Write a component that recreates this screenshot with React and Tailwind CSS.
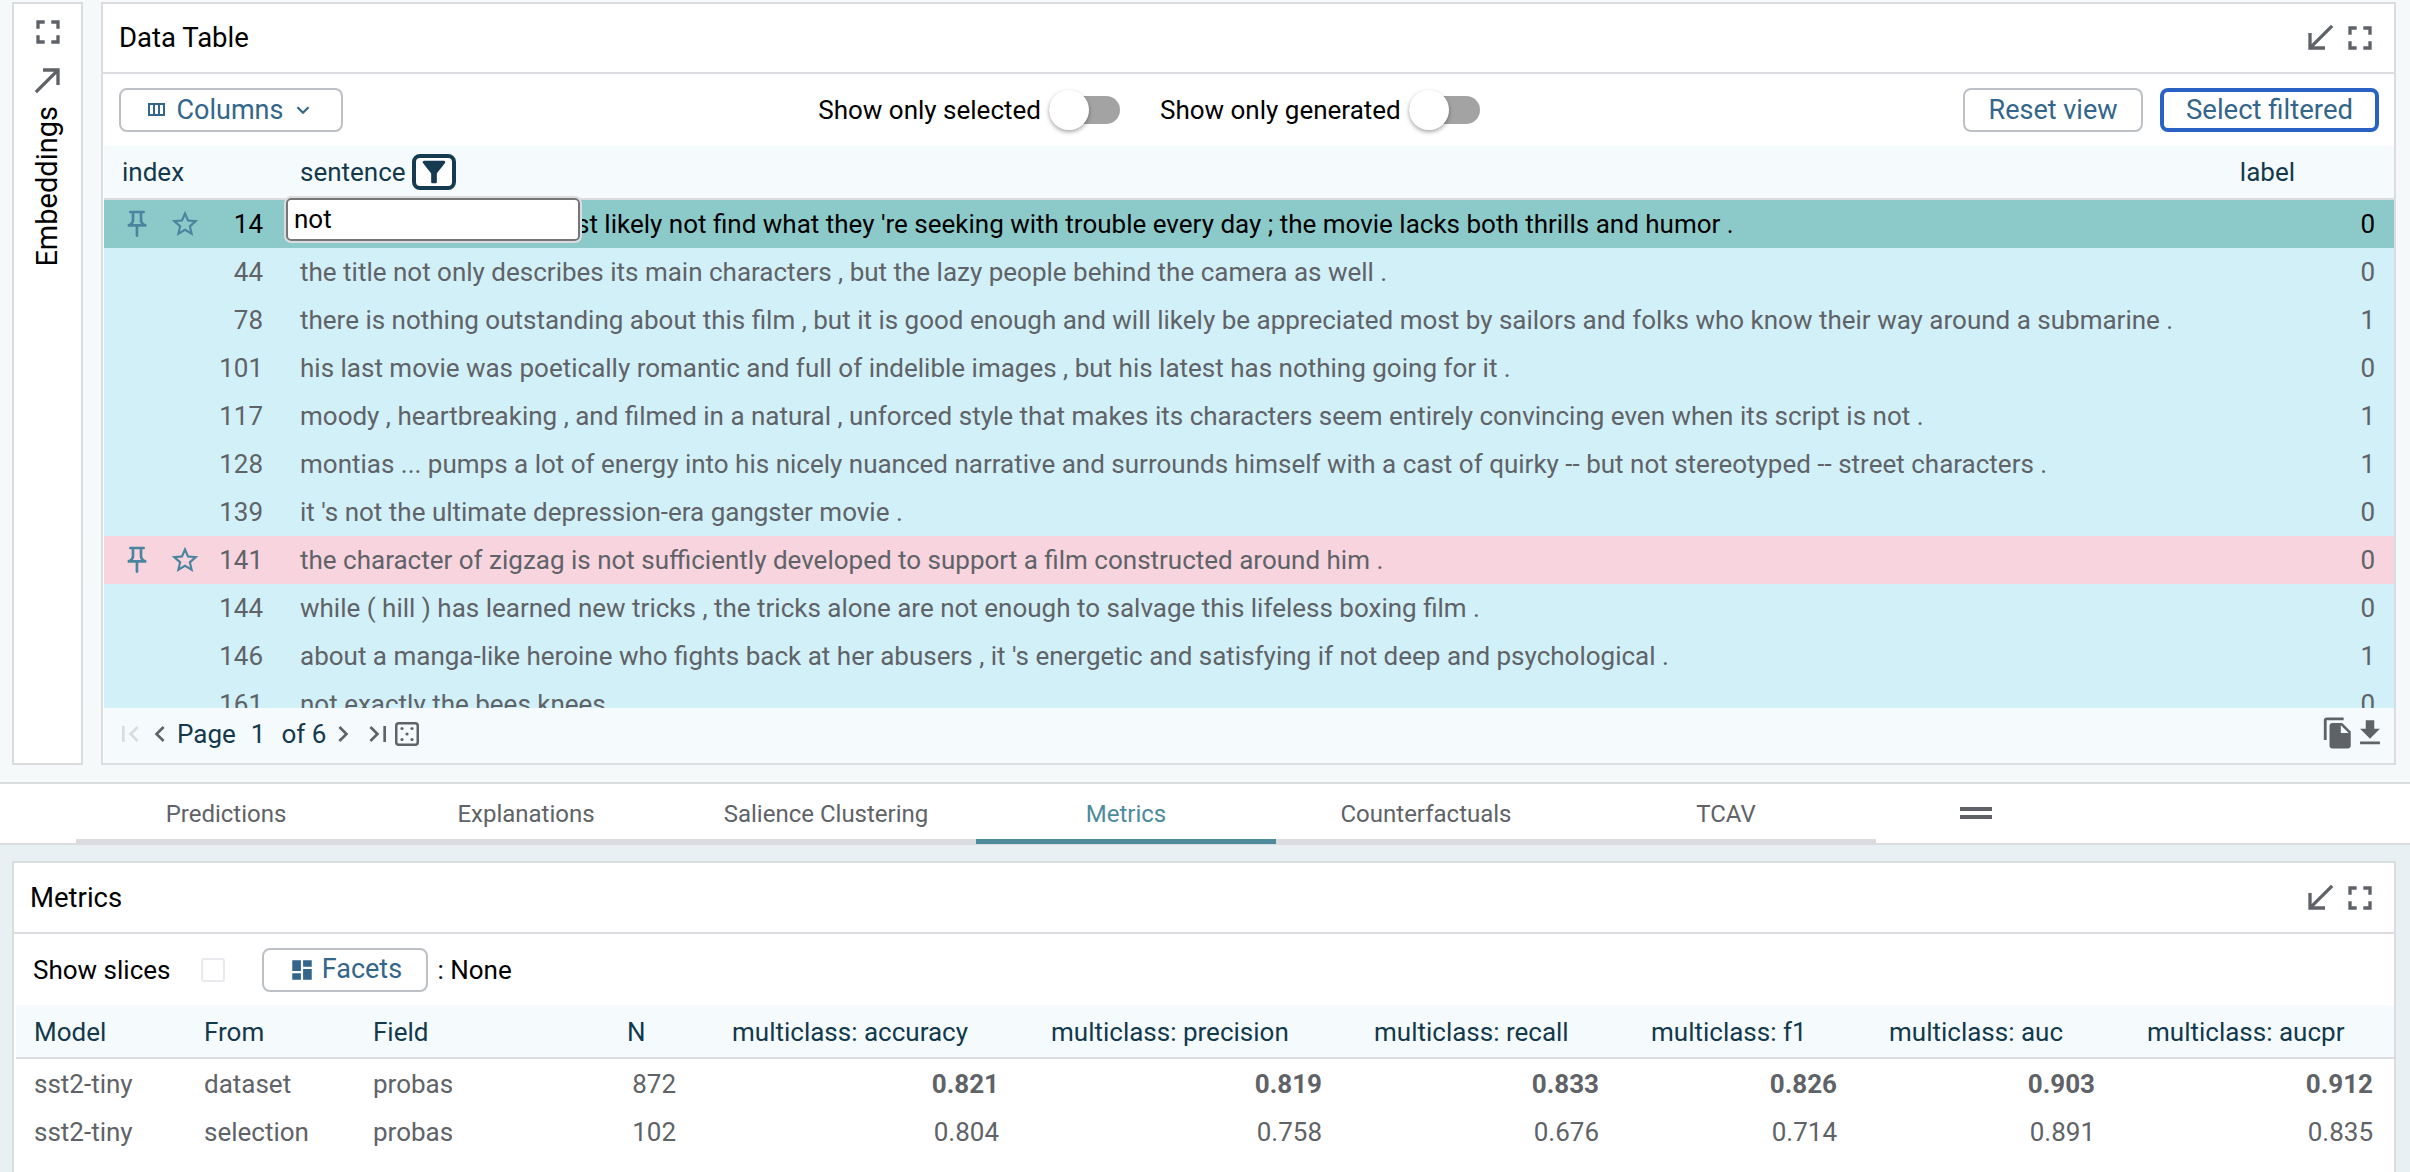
import React from "react";

const Ico = ({ d, className = "", size = 40 }) => (
  <svg viewBox="0 0 24 24" width={size} height={size} className={`shrink-0 fill-current ${className}`}>
    <path d={d} />
  </svg>
);

const P = {
  full: "M7 14H5v5h5v-2H7v-3zm-2-4h2V7h3V5H5v5zm12 7h-3v2h5v-5h-2v3zM14 5v2h3v3h2V5h-5z",
  ne: "M9 5v2h6.59L4 18.59 5.41 20 17 8.41V15h2V5H9z",
  sw: "M15 19v-2H8.41L20 5.41 18.59 4 7 15.59V9H5v10h10z",
  col: "M4 5v13h17V5H4zm10 2v9h-3V7h3zM6 7h3v9H6V7zm13 9h-3V7h3v9z",
  pin: "M14 4v5c0 1.12.37 2.16 1 3H9c.65-.86 1-1.9 1-3V4h4m3-2H7c-.55 0-1 .45-1 1s.45 1 1 1h1v5c0 1.66-1.34 3-3 3v2h5.97v7l1 1 1-1v-7H19v-2c-1.66 0-3-1.34-3-3V4h1c.55 0 1-.45 1-1s-.45-1-1-1z",
  star: "M22 9.24l-7.19-.62L12 2 9.19 8.63 2 9.24l5.46 4.73L5.82 21 12 17.27 18.18 21l-1.63-7.03L22 9.24zM12 15.4l-3.76 2.27 1-4.28-3.32-2.88 4.38-.38L12 6.1l1.71 4.04 4.38.38-3.32 2.88 1 4.28L12 15.4z",
  filter: "M4.25 5.61C6.27 8.2 10 13 10 13v6c0 .55.45 1 1 1h2c.55 0 1-.45 1-1v-6s3.72-4.8 5.74-7.39A1 1 0 0 0 18.95 4H5.04a1 1 0 0 0-.79 1.61z",
  prev: "M15.41 7.41 14 6l-6 6 6 6 1.41-1.41L10.83 12z",
  next: "M10 6 8.59 7.41 13.17 12l-4.58 4.59L10 18l6-6z",
  first: "M18.41 16.59 13.82 12l4.59-4.59L17 6l-6 6 6 6zM6 6h2v12H6z",
  last: "M5.59 7.41 10.18 12l-4.59 4.59L7 18l6-6-6-6zM16 6h2v12h-2z",
  copy: "M16 1H4c-1.1 0-2 .9-2 2v14h2V3h12V1zm-1 4 6 6v10c0 1.1-.9 2-2 2H7.99C6.89 23 6 22.1 6 21l.01-14c0-1.1.89-2 1.99-2h7zm-1 7h5.5L14 6.5V12z",
  dl: "M19 9h-4V3H9v6H5l7 7 7-7zM5 18v2h14v-2H5z",
  dash: "M3 13h8V3H3v10zm0 8h8v-6H3v6zm10 0h8V11h-8v10zm0-18v6h8V3h-8z",
};

const rows = [
  ["14", "st likely not find what they 're seeking with trouble every day ; the movie lacks both thrills and humor .", "0", "p"],
  ["44", "the title not only describes its main characters , but the lazy people behind the camera as well .", "0"],
  ["78", "there is nothing outstanding about this film , but it is good enough and will likely be appreciated most by sailors and folks who know their way around a submarine .", "1"],
  ["101", "his last movie was poetically romantic and full of indelible images , but his latest has nothing going for it .", "0"],
  ["117", "moody , heartbreaking , and filmed in a natural , unforced style that makes its characters seem entirely convincing even when its script is not .", "1"],
  ["128", "montias ... pumps a lot of energy into his nicely nuanced narrative and surrounds himself with a cast of quirky -- but not stereotyped -- street characters .", "1"],
  ["139", "it 's not the ultimate depression-era gangster movie .", "0"],
  ["141", "the character of zigzag is not sufficiently developed to support a film constructed around him .", "0", "r"],
  ["144", "while ( hill ) has learned new tricks , the tricks alone are not enough to salvage this lifeless boxing film .", "0"],
  ["146", "about a manga-like heroine who fights back at her abusers , it 's energetic and satisfying if not deep and psychological .", "1"],
  ["161", "not exactly the bees knees", "0"],
];

const Btn = ({ children, className = "", border = "border-2 border-[#bdc1c6]", text = "text-[27px]" }) => (
  <button className={`flex h-[44px] items-center justify-center rounded-[8px] bg-white text-[#33668a] ${text} ${border} ${className}`}>
    {children}
  </button>
);

const Toggle = ({ label }) => (
  <div className="flex items-center">
    <span className="text-[26px] text-black">{label}</span>
    <div className="relative ml-[8px] h-[28px] w-[71px] rounded-full bg-[#a3a3a3]">
      <div className="absolute left-0 top-[-6px] h-[40px] w-[40px] rounded-full bg-white shadow-[0_2px_4px_rgba(0,0,0,0.35)]" />
    </div>
  </div>
);

const TitleBar = ({ title, h }) => (
  <div className={`flex shrink-0 items-center justify-between border-b-2 border-[#dadce0] bg-white pl-[16px] pr-[14px] ${h}`}>
    <span className="text-[27.5px] text-black">{title}</span>
    <div className="flex text-[#5f6368]">
      <Ico d={P.sw} />
      <Ico d={P.full} />
    </div>
  </div>
);

const tabs = ["Predictions", "Explanations", "Salience Clustering", "Metrics", "Counterfactuals", "TCAV"];

const mHead = ["Model", "From", "Field", "N", "multiclass: accuracy", "multiclass: precision", "multiclass: recall", "multiclass: f1", "multiclass: auc", "multiclass: aucpr"];
const mRows = [
  ["sst2-tiny", "dataset", "probas", "872", "0.821", "0.819", "0.833", "0.826", "0.903", "0.912"],
  ["sst2-tiny", "selection", "probas", "102", "0.804", "0.758", "0.676", "0.714", "0.891", "0.835"],
];
const mGrid = "grid grid-cols-[170px_169px_254px_105px_319px_323px_277px_238px_258px_1fr]";

export default function App() {
  return (
    <div className="flex h-[1172px] w-[2410px] flex-col overflow-hidden bg-white font-['Roboto',sans-serif]">
      <div className="flex h-[782px] shrink-0 gap-[18px] bg-[#f5f9fa] pb-[17px] pl-[12px] pr-[14px] pt-[2px]">
        <div className="flex w-[71px] shrink-0 flex-col items-center border-2 border-[#dadce0] bg-white pt-[8px] text-[#5f6368]">
          <Ico d={P.full} />
          <div className="mt-[8px]"><Ico d={P.ne} /></div>
          <span className="mt-[6px] rotate-180 text-[29px] text-black [writing-mode:vertical-rl]">Embeddings</span>
        </div>

        <div className="flex min-w-0 flex-1 flex-col border-2 border-[#dadce0] bg-white">
          <TitleBar title="Data Table" h="h-[70px]" />
          <div className="flex h-[72px] shrink-0 items-center justify-between pl-[16px] pr-[15px]">
            <Btn className="w-[224px] gap-[9px]">
              <Ico d={P.col} size={24} className="-ml-[4px]" />
              <span>Columns</span>
              <svg viewBox="0 0 24 24" width="22" height="22" className="fill-none stroke-current stroke-[2.5]"><path d="m6 9 6 6 6-6" /></svg>
            </Btn>
            <div className="mr-[8px] flex gap-[40px]">
              <Toggle label="Show only selected" />
              <Toggle label="Show only generated" />
            </div>
            <div className="flex gap-[17px]">
              <Btn className="w-[180px]">Reset view</Btn>
              <Btn className="w-[219px]" text="text-[27.5px]" border="border-[4px] border-[#2962c4]">Select filtered</Btn>
            </div>
          </div>

          <div className="relative ml-[1px] flex min-h-0 flex-1 flex-col">
            <div className="flex h-[54px] shrink-0 items-center border-b-2 border-[#dadce0] bg-[#f5fbfc] text-[26px] text-[#13394d]">
              <span className="ml-[18px] w-[178px] pt-[1px]">index</span>
              <span className="pt-[1px]">sentence</span>
              <span className="ml-[6px] flex h-[36px] w-[44px] items-center justify-center rounded-[8px] border-[4px] border-[#163a4f] bg-white text-[#163a4f]">
                <Ico d={P.filter} size={34} />
              </span>
              <span className="ml-auto mr-[99px] pt-[1px]">label</span>
            </div>
            <div className="absolute left-[182px] top-[52px] z-10 flex h-[43px] w-[294px] items-start rounded-[5px] border-2 border-[#767676] bg-white pl-[6px] text-[26px] leading-[38px] text-black outline-2 outline-[#dadce0]">
              not
            </div>
            <div className="h-[508px] shrink-0 overflow-hidden bg-[#d2f0f8]">
              {rows.map(([i, s, l, k]) => (
                <div
                  key={i}
                  className={`flex h-[48px] items-center text-[26px] ${k === "p" ? "bg-[#8ccaca] text-black" : k === "r" ? "bg-[#f7d4de] text-[#5f6368]" : "text-[#5f6368]"}`}
                >
                  <div className="flex w-[159px] shrink-0 items-center pl-[17px]">
                    {k && (
                      <div className="flex gap-[16px] text-[#4a859f]">
                        <Ico d={P.pin} size={32} />
                        <Ico d={P.star} size={32} />
                      </div>
                    )}
                    <span className="ml-auto pt-[1px]">{i}</span>
                  </div>
                  <span className={`whitespace-nowrap pt-[1px] ${k === "p" ? "ml-[313px]" : "ml-[37px]"}`}>{s}</span>
                  <span className="ml-auto mr-[19px] pt-[1px]">{l}</span>
                </div>
              ))}
            </div>
            <div className="flex flex-1 items-start justify-between bg-[#f5fbfc] pl-[10px] pr-[7px] pt-[8px]">
              <div className="flex h-[36px] items-center text-[26px] text-[#13394d]">
                <Ico d={P.first} size={32} className="text-[#dadce0]" />
                <Ico d={P.prev} size={32} className="-ml-[2px] text-[#5f6368]" />
                <span className="ml-[1px]">Page</span>
                <span className="ml-[15px]">1</span>
                <span className="ml-[16px]">of 6</span>
                <Ico d={P.next} size={32} className="ml-[1px] text-[#5f6368]" />
                <Ico d={P.last} size={32} className="ml-[3px] text-[#5f6368]" />
                <svg viewBox="0 0 24 24" width="24" height="24" className="ml-[1px] text-[#5f6368]">
                  <rect x="1.25" y="1.25" width="21.5" height="21.5" rx="2.5" className="fill-none stroke-current stroke-[2.5]" />
                  <circle cx="7" cy="6.5" r="1.6" className="fill-current" />
                  <circle cx="17" cy="6.5" r="1.6" className="fill-current" />
                  <circle cx="12" cy="12" r="1.6" className="fill-current" />
                  <circle cx="7" cy="17.5" r="1.6" className="fill-current" />
                  <circle cx="17" cy="17.5" r="1.6" className="fill-current" />
                </svg>
              </div>
              <div className="flex text-[#5f6368]">
                <Ico d={P.copy} size={34} />
                <Ico d={P.dl} size={34} className="-ml-[2px]" />
              </div>
            </div>
          </div>
        </div>
      </div>

      <div className="flex h-[63px] shrink-0 border-y-2 border-[#dadce0] bg-white">
        <div className="ml-[76px] flex h-[60px] w-[1800px] border-b-[5px] border-[#dadce0]">
          {tabs.map((t) => (
            <div
              key={t}
              className={`-mb-[5px] flex h-[60px] w-[300px] items-center justify-center border-b-[5px] pt-[4px] text-[24px] ${t === "Metrics" ? "border-[#4d8b9c] text-[#4d8b9c]" : "border-transparent text-[#5f6368]"}`}
            >
              {t}
            </div>
          ))}
        </div>
        <div className="ml-[84px] mt-[23px] flex h-[12px] w-[32px] flex-col justify-between">
          <div className="h-[4px] bg-[#5f6368]" />
          <div className="h-[4px] bg-[#5f6368]" />
        </div>
      </div>

      <div className="flex min-h-0 flex-1 flex-col bg-[#e8f0f3] pl-[12px] pr-[14px] pt-[16px]">
        <div className="flex flex-1 flex-col border-x-2 border-t-2 border-[#dadce0] bg-white">
          <TitleBar title="Metrics" h="h-[71px]" />
          <div className="flex h-[71px] shrink-0 items-center pl-[19px] text-[26px] text-black">
            <span className="pt-[1px]">Show slices</span>
            <span className="ml-[31px] h-[24px] w-[24px] rounded-[3px] border-2 border-[#e8eaed] bg-white" />
            <Btn className="ml-[37px] w-[166px] gap-[7px]">
              <Ico d={P.dash} size={26} />
              <span>Facets</span>
            </Btn>
            <span className="ml-[9px] pt-[1px]">: None</span>
          </div>
          <div className={`${mGrid} ml-[2px] h-[54px] shrink-0 items-center border-b-2 border-[#dadce0] bg-[#f5fbfc] pl-[18px] pt-[3px] text-[26px] text-[#13394d]`}>
            {mHead.map((h) => <span key={h} className="whitespace-nowrap">{h}</span>)}
          </div>
          {mRows.map((r, ri) => (
            <div key={ri} className={`${mGrid} ml-[2px] h-[48px] shrink-0 items-center pl-[18px] pt-[2px] text-[26px] text-[#5f6368]`}>
              {r.map((c, ci) => (
                <span
                  key={ci}
                  className={`${ci === 3 ? "pr-[56px] text-right" : ci > 3 && ci < 9 ? "pr-[52px] text-right" : ci === 9 ? "pr-[21px] text-right" : ""} ${ci > 3 && ri === 0 ? "font-bold" : ""}`}
                >
                  {c}
                </span>
              ))}
            </div>
          ))}
        </div>
      </div>
    </div>
  );
}
